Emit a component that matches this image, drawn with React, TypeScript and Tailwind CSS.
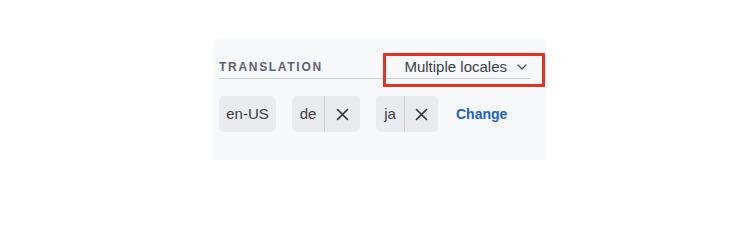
import React from 'react'

const font = { fontFamily: '"Liberation Sans", Arial, sans-serif' }

function Close() {
    return (
        <svg width="13" height="13" viewBox="0 0 13 13" className="text-[#2b2f36]">
            <path d="M1.5 1.5 L11.5 11.5 M11.5 1.5 L1.5 11.5" stroke="currentColor" strokeWidth="1.6" strokeLinecap="round" />
        </svg>
    )
}

function Locale({ code, removable, w, xw }: { code: string; removable?: boolean; w?: string; xw?: string }) {
    if (!removable) {
        return (
            <div className="flex h-[36px] w-[57px] shrink-0 items-center justify-center whitespace-nowrap rounded-[5px] bg-[#e9ebee] text-[15px] text-[#3a3e45]">
                {code}
            </div>
        )
    }
    return (
        <div className="flex h-[36px] shrink-0 items-stretch rounded-[5px] bg-[#e9ebee] text-[15px] text-[#3a3e45]">
            <span className={`flex items-center justify-center ${w}`}>{code}</span>
            <span className="w-px bg-[#cdd0d5]" />
            <span className={`flex items-center justify-center ${xw}`}>
                <Close />
            </span>
        </div>
    )
}

export default function App() {
    return (
        <div className="w-[730px] h-[205px] bg-white pt-[39px] pl-[214px]" style={font}>
            <div className="w-[332px] h-[121px] bg-[#f7f8fa] pl-[5px] pt-[17px]">
                {/* Header */}
                <div className="relative flex w-[311px] h-[23px] items-center justify-between border-b border-[#c8ccd2]">
                    <span className="text-[12px] font-bold tracking-[1.7px] text-[#5c6272]">TRANSLATION</span>
                    <div className="flex items-center gap-[10px] pr-[3px] text-[15px] text-[#3a3e45]">
                        <span>Multiple locales</span>
                        <svg width="10" height="6" viewBox="0 0 10 6" className="text-[#4a4f58]">
                            <path d="M1 1 L5 5 L9 1" fill="none" stroke="currentColor" strokeWidth="1.3" strokeLinecap="round" strokeLinejoin="round" />
                        </svg>
                    </div>
                    {/* Highlight box */}
                    <div className="absolute left-[164px] top-[-3px] w-[162px] h-[34px] border-[3px] border-[#e5321e]" />
                </div>

                {/* Locales */}
                <div className="mt-[17px] flex items-center gap-4">
                    <Locale code="en-US" />
                    <Locale code="de" removable w="w-[32px]" xw="w-[35px]" />
                    <Locale code="ja" removable w="w-[28px]" xw="w-[33px]" />
                    <span className="ml-[2px] text-[14px] font-bold text-[#1c62c4]">Change</span>
                </div>
            </div>
        </div>
    )
}
